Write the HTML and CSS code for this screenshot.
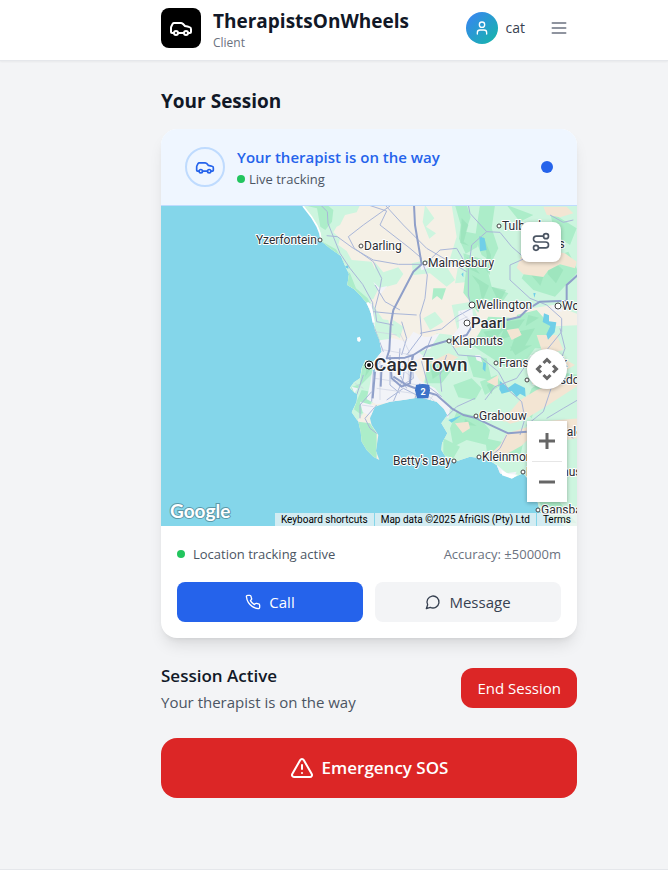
FILE: index.html
```html
<!DOCTYPE html>
<html lang="en">
<head>
<meta charset="utf-8">
<meta name="viewport" content="width=device-width, initial-scale=1">
<title>TherapistsOnWheels</title>
<link rel="stylesheet" href="styles.css">
</head>
<body>
<svg class="sprite" aria-hidden="true">
  <symbol id="car" viewBox="0 0 24 24"><path d="M19 17h2c.6 0 1-.4 1-1v-3c0-.9-.7-1.7-1.5-1.9C18.7 10.6 16 10 16 10s-1.300-1.400-2.200-2.300c-.5-.4-1.100-.7-1.800-.7H5c-.6 0-1.100.4-1.400.9l-1.400 2.900A3.700 3.700 0 0 0 2 12v4c0 .6.4 1 1 1h2"/><circle cx="7" cy="17" r="2"/><path d="M9 17h6"/><circle cx="17" cy="17" r="2"/></symbol>
</svg>
<header class="topbar">
  <div class="container topbar-row">
    <div class="logo"><svg class="icon icon-24"><use href="#car"/></svg></div>
    <div class="brand">
      <span class="brand-name">TherapistsOnWheels</span>
      <span class="brand-role">Client</span>
    </div>
    <div class="account">
      <span class="avatar"><svg class="icon icon-16" viewBox="0 0 24 24"><path d="M19 21v-2a4 4 0 0 0-4-4H9a4 4 0 0 0-4 4v2"/><circle cx="12" cy="7" r="4"/></svg></span>
      <span class="user-name">cat</span>
    </div>
    <button class="menu-button" type="button" aria-label="Menu"><svg class="icon icon-20" viewBox="0 0 24 24"><path d="M4 6h16M4 12h16M4 18h16"/></svg></button>
  </div>
</header>

<main class="main">
 <div class="container content">
  <h1 class="page-title">Your Session</h1>
  <section class="card">
    <div class="card-head">
      <div class="ring"><svg class="icon icon-20"><use href="#car"/></svg></div>
      <div class="head-text">
        <h2 class="head-title">Your therapist is on the way</h2>
        <p class="live"><span class="dot"></span>Live tracking</p>
      </div>
      <span class="pulse"></span>
    </div>

    <div class="map">
      <svg class="map-canvas" viewBox="0 0 416 320" preserveAspectRatio="xMidYMid slice" role="img" aria-label="Map of Cape Town and surroundings">
        <defs>
          <path id="coast" d="M-111 3L-86 35-69 63-60 85-57 108-30 130 3 153 14 180 27 207 22 240 42 252 60 270 80 293 95 330 105 375 118 405 125 440 100 470 76 465 65 490 60 520 42 532 30 548 40 560 52 568 50 590 35 622 55 650 62 680 65 710 80 735 100 755 118 765 108 738 115 690 95 660 90 640 105 605 150 590 195 584 240 577 290 590 312 612 322 630 304 655 322 685 306 715 304 735 320 760 345 770 390 755 440 762 470 780 480 805 515 820 550 805 570 830 590 880 600 920 640 940 680 966 720 966V0H-111Z"/>
          <clipPath id="land"><use href="#coast"/></clipPath>
        </defs>
        <rect width="416" height="320" fill="#84d6ea"/>
        <g transform="translate(179 -1) scale(.333333)">
          <use href="#coast" fill="#f5f0e6"/>
          <g clip-path="url(#land)">
            <g fill="#cdf5df">
              <path d="M-111 0L10 0 60 0 50 22 15 30 0 60-10 65-20 82 0 100-5 120 20 138 35 165 95 170 110 205 70 215 90 230 92 290 130 345 100 360 60 300 0 260-120 120Z"/>
              <path d="M60 195l45 5 0-28 25 30 45-15 15 20-20 30-55 15-15 30-30 5-15-30-25-8z"/>
              <path d="M335 0H720V330L640 300 560 312 470 290 400 300 390 230 345 235 355 180 330 160 350 95Z"/>
              <path d="M255 0l28 40-25 25 30 20-20 16-20-50zM215 175l45-10 60 20 25 40-25 20-50-40-50 5zM100 340l45 5 10 50-20 40-30-25zM250 340l35-20 25 30-40 25zM160 345l30 20-10 35-30-20zM335 300l60-10 20 50-30 5-20 70-40 45-80 5-10-25 70-18 50-35z"/>
              <path d="M290 385L420 400 500 370 720 360V966H560L470 780 300 780V620L245 550 260 505 350 480 320 440 270 430Z"/>
              <path d="M20 490l90-30-10 130-60 70z"/>
            </g>
            <g fill="#acedc9">
              <path d="M-111 0H-38l18 15-4 35-20 25-15-10-10-55zM-57 108l45 25 25 40-28-8zM0 185l30 20 18 45 35 30 10 20-40-20-35-25zM68 480l38-10 2 25-40 40-30 30-4-18 25-10zM65 555l40 8-18 45-25 20-20-15 8-25zM55 650l35 5 20 30 0 80-50-40z"/>
              <path d="M345 0l35 0 12 35-15 45 40 8-5 38-35 20-20-45 5-42zM420 0h45l-10 70 20 60-20 40-30-20-20-50zM370 145l65 20 20 80 50 20-20 28-60-15-10 45-45-60 8-65zM390 180l50-5 0 50-36 28zM445 335l100 5 100 90-60 0-30 40-60 15-100-65 25-40zM530 330l60-15 50 55-30 45-50-8zM500 0l80 30-40 20zM630 20l80 50-20 50-45-30zM565 180l120-40 30 60-70 75-65-20-35-35z"/>
              <path d="M280 250h38l-12 35-15-12-15 12zM260 470l55-10 20 35-30 40-50 0zM340 540l55-20 30 30-20 35-50-8zM420 530l50-20 15 30-50 30zM380 450l60 10 15 65-55-10zM575 550l80-50 60 10-60 25-60 40-20 65-25-25zM350 620l65 15 35 40-10 45-60-15-40 20-10-55zM590 870l60 10 60 75-90-10zM310 700l50 25-20 35-30-10zM435 700l70 15 50-25-15 65-95 15z"/>
            </g>
            <g fill="#96e1b8" opacity=".65">
              <path d="M365 40l20 20-14 50 16 12-26-8zM428 90l25 60-4 60-18-25 10-32zM380 155l40 52-30-14zM454 245l44 10-20 40zM500 350l55-8-34 48-42 16zM430 380l64-10-40 46zM530 380l55-10-33 58-42 10zM565 330l32 8-40 25zM510 425l66-4-50 30zM395 210l52 32-20 48-10-50zM620 150l50 45-22 40-25-28zM565 200l46 12-10 30zM270 480l48 14-40 28zM375 642l35 20-38-2zM80 490l20-10-25 36zM440 540l25-14-10 42z"/>
            </g>
            <g fill="#f3e5d3">
              <path d="M545 150l70-15 60 10 35 25-5 20-45-12-35 18-15 20-60-8-20-20zM610 5l70 0 20 20-40 12-40-8zM500 375l35-5 10 20-30 15zM470 635l35-15 22 20-35 10zM540 585l50-30 110-42 15 28-100 65-65 40-40 10-20-12zM590 650l130-10v58l-65 10-60-15zM345 655l40-5 5 20-22 14zM500 685l60-18 25 15-40 40-50 28-60 12 45-42zM440 530l35-20-2 36zM265 475l60-30 30 12-38 22zM330 410l25-8 20 20-30 8zM590 390l60 0 20 45-60 15zM610 470l60-10 35 20-35 20z"/>
            </g>
            <g fill="#f2f3f8">
              <path d="M82 292l15 5 8 70-15-20zM100 230l18 18 24-5-22 26zM355 318l42-8 4 50-22 45-44-8 22-30zM90 410l70-10 40 10 20-30 40 20-28 38 18 15-40 25 30 50-25 20 10 35-115 15-30-15 10-45 10-60zM225 520l60 30 45 60-5 30-85-62-35-28zM35 545l18 5-10 15zM60 590l45 12-12 30-25-10zM200 400l70-5 30-12-30 48-55 12zM405 450l16 0 5 22-16-6zM570 450l40 5-30 15zM465 775l35 30 30-5-10 20-45-10zM635 300l30 0 0 20-30-5zM240 180l20-8 8 16-24 8z"/>
            </g>
            <g fill="#70cfe8">
              <path d="M418 94l16 6 6 35-20 4zM612 325l15 6 0 18 22 3-5 30-20 22-5-16 12-25-23-12zM480 528l25 20 20-14 30 15 2 26-17-9-10 10-15-18-30 8-7-13zM430 470l8 5-2 25-8-8zM364 208l6-6 0 15zM10 185l15-4 0 10zM580 264l7 0-4 14zM325 645l40-14-30 22zM98 495l7 0-4 18z"/>
            </g>
            <g class="minor">
              <path d="M-58 0L-38 20-36 55 0 145 30 190 68 238 98 293 100 360 130 440M-40 92L-8 95 40 130 100 165 175 178 250 178M150 3L70 60 25 95 43 130 100 170 125 220 118 260 105 310 110 350M85 0L140 18 120 60 210 130 245 160M138 3L190 60 260 130 380 200M250 180L262 210 255 280 240 330 245 390 200 450M255 178L300 135 350 130 385 190 385 270 395 310M385 0L390 25 440 80 395 120 390 160M440 80L480 82 515 125 555 160M555 160L510 180 510 225 570 280 620 300M105 240L135 290 180 315M100 320L150 325 230 330M110 350L160 360M240 385L305 372 350 335 395 310M330 410L355 450 420 455 475 500 505 555 545 590M275 395L245 470 265 545 305 575M140 585L190 550 290 600M320 450L300 510 305 560M320 635L350 605 405 580M435 585L465 545 530 520 565 470M545 590L555 640 540 690M500 690L480 730 445 760M620 300L665 340 665 380 600 460M655 300L690 310M700 45L670 52 630 30M660 370L675 430 640 530 610 620 560 660M713 585L670 610 620 640M700 700L670 680M95 560L60 600 60 640M110 600L75 640 90 670 110 685M160 590L190 520 195 470M125 460L100 500 95 590M150 450L150 540 180 565M180 430L175 500 200 550M215 455L220 520 180 545M185 350L200 400 185 450M70 510L50 570M240 535L225 580"/>
            </g>
            <g class="street">
              <path d="M105 430l110 20M100 485h100M105 520l130 20M110 550l110 15M150 465l70 55M120 455v130M205 445v80M240 550l70 62M265 555l-15 35M45 535l25 15M65 600l35 5M280 570l-20 30M180 385l30 60M105 380l65 10M350 350l32-15M360 320l35 30"/>
            </g>
            <g class="major">
              <path d="M222 0L225 60 245 178 220 200 160 315 152 360 148 435 140 460 195 458 220 450 260 425 330 405 380 390 395 365M500 345L540 335 560 315 600 290 680 287 680 240 713 210M160 515L200 540 240 555 290 570 335 610 370 630 405 638 455 662 505 685 560 680M150 460L155 520 185 545 210 535 215 470 220 450M105 500L98 580M125 480L122 545"/>
            </g>
          </g>
          <path d="M-111 3L-86 35-69 63-60 85-57 108" fill="none" stroke="#fff" stroke-width="5"/>
          <path d="M82 293l12 20 7 40" fill="none" stroke="#fff" stroke-width="7"/>
          <path d="M51 398l8-3 4 9-5 7-6-3zM484 795l22 12 28 2-18 12-30-10z" fill="#fff"/>
          <path d="M228 540q20-6 40 0l2 16-5 24h-34l-6-24z" fill="#3d73c9"/>
        </g>
        <g class="pins">
          <circle cx="159" cy="34" r="2"/><circle cx="200" cy="40" r="2"/><circle cx="264" cy="57" r="2"/><circle cx="338" cy="20" r="2"/><circle cx="311" cy="99" r="3"/><circle cx="306" cy="117" r="3"/><circle cx="288" cy="135" r="2"/><circle cx="335" cy="157" r="2"/><circle cx="397" cy="100" r="3"/><circle cx="366" cy="174" r="2"/><circle cx="315" cy="210" r="2"/><circle cx="318" cy="251" r="2"/><circle cx="293" cy="255" r="2"/><circle cx="362" cy="266" r="2"/><circle cx="377" cy="304" r="2"/>
        </g>
        <circle cx="208" cy="159" r="4" fill="#fff" stroke="#111"/><circle cx="208" cy="159" r="2" fill="#111"/>
        <g class="labels">
          <text x="95" y="38">Yzerfontein</text><text x="203" y="44">Darling</text><text x="267" y="61">Malmesbury</text><text x="341" y="24">Tulbagh</text><text x="373" y="42">Ceres</text><text x="315" y="103">Wellington</text><text x="401" y="104">Wo</text><text x="291" y="139">Klapmuts</text><text x="338" y="161">Franschhoek</text><text x="369" y="178">Villiersdo</text><text x="318" y="214">Grabouw</text><text x="398" y="230">Cale</text><text x="321" y="255">Kleinmond</text><text x="232" y="259">Betty's Bay</text><text x="365" y="270">Hermanus</text><text x="380" y="308">Gansba</text>
          <text class="town" x="310" y="122">Paarl</text>
          <text class="city" x="213" y="165">Cape Town</text>
        </g>
        <text class="shield" x="262" y="189">2</text>
        <text class="map-logo" x="9" y="312">Google</text>
      </svg>
      <button class="map-button route" type="button" aria-label="Show route"><svg class="icon icon-20" viewBox="0 0 24 24"><circle cx="6" cy="19" r="3"/><path d="M9 19h8.500a3.500 3.500 0 0 0 0-7h-11a3.500 3.500 0 0 1 0-7H15"/><circle cx="18" cy="5" r="3"/></svg></button>
      <div class="map-controls">
        <button class="map-button pan" type="button" aria-label="Map camera controls"><svg class="control-icon" viewBox="0 0 24 24"><path d="M8.500 6L12 2.500 15.500 6M8.500 18l3.500 3.500 3.500-3.500M6 8.500L2.500 12 6 15.500M18 8.500l3.500 3.500-3.500 3.500"/></svg></button>
        <div class="zoom">
          <button type="button" aria-label="Zoom in"><svg class="control-icon" viewBox="0 0 24 24"><path d="M4 12h16M12 4v16"/></svg></button>
          <hr>
          <button type="button" aria-label="Zoom out"><svg class="control-icon" viewBox="0 0 24 24"><path d="M4 12h16"/></svg></button>
        </div>
      </div>
      <div class="attribution">
        <button type="button">Keyboard shortcuts</button>
        <span>Map data ©2025 AfriGIS (Pty) Ltd</span>
        <a href="#terms">Terms</a>
      </div>
    </div>

    <div class="card-foot">
      <div class="status">
        <span class="status-live"><span class="dot"></span>Location tracking active</span>
        <span class="accuracy">Accuracy: ±50000m</span>
      </div>
      <div class="actions">
        <button class="action call" type="button"><svg class="icon icon-16" viewBox="0 0 24 24"><path d="M22 16.920v3a2 2 0 0 1-2.180 2 19.790 19.790 0 0 1-8.630-3.070 19.500 19.500 0 0 1-6-6 19.790 19.790 0 0 1-3.070-8.670A2 2 0 0 1 4.110 2h3a2 2 0 0 1 2 1.720 12.840 12.840 0 0 0 .7 2.810 2 2 0 0 1-.45 2.110L8.090 9.910a16 16 0 0 0 6 6l1.270-1.270a2 2 0 0 1 2.110-.45 12.840 12.840 0 0 0 2.810.7A2 2 0 0 1 22 16.920z"/></svg>Call</button>
        <button class="action message" type="button"><svg class="icon icon-16" viewBox="0 0 24 24"><path d="M7.900 20A9 9 0 1 0 4 16.100L2 22Z"/></svg>Message</button>
      </div>
    </div>
  </section>

  <section class="session">
    <div>
      <h2 class="session-title">Session Active</h2>
      <p class="session-note">Your therapist is on the way</p>
    </div>
    <button class="end" type="button">End Session</button>
  </section>
  <button class="sos" type="button"><svg class="icon icon-24" viewBox="0 0 24 24"><path d="m21.730 18-8-14a2 2 0 0 0-3.480 0l-8 14A2 2 0 0 0 4 21h16a2 2 0 0 0 1.730-3Z"/><path d="M12 9v4M12 17h.01"/></svg>Emergency SOS</button>
 </div>
</main>
<footer class="bottom-bar"></footer>
</body>
</html>
```
FILE: styles.css
```css
* { box-sizing: border-box; }

body {
  margin: 0;
  min-height: 100vh;
  display: flex;
  flex-direction: column;
  background: #f3f4f6;
  color: #111827;
  font: 15px/24px "Segoe UI", "Open Sans", sans-serif;
}

h1, h2, p { margin: 0; }
button { font: inherit; border: 0; cursor: pointer; }

.sprite { position: absolute; width: 0; height: 0; }

.icon {
  display: block;
  flex: none;
  fill: none;
  stroke: currentColor;
  stroke-width: 2;
  stroke-linecap: round;
  stroke-linejoin: round;
}
.icon-16 { width: 16px; height: 16px; }
.icon-20 { width: 20px; height: 20px; }
.icon-24 { width: 24px; height: 24px; }

.topbar, .main { padding-left: 70px; }
.main { flex: 1; }

.container { width: 100%; max-width: 448px; margin: 0 auto; }

.topbar {
  background: #fff;
  border-bottom: 1px solid #e5e7eb;
  box-shadow: 0 1px 2px rgba(0, 0, 0, .05);
}

.topbar-row {
  display: flex;
  align-items: center;
  padding: 6px 16px 10px;
}

.logo {
  display: grid;
  place-items: center;
  width: 40px;
  height: 40px;
  border-radius: 8px;
  background: #000;
  color: #fff;
}

.brand { display: flex; flex-direction: column; margin-left: 12px; }
.brand-name { font-size: 19px; line-height: 30px; font-weight: 700; }
.brand-role { font-size: 12px; line-height: 14px; color: #6b7280; }

.account { display: flex; align-items: center; gap: 8px; margin-left: auto; }
.avatar {
  display: grid;
  place-items: center;
  width: 32px;
  height: 32px;
  border-radius: 50%;
  background: linear-gradient(135deg, #3b82f6, #14b8a6);
  color: #fff;
}
.user-name { font-size: 14px; color: #374151; }

.menu-button {
  margin-left: 16px;
  padding: 8px;
  background: none;
  color: #6b7280;
}

.content { padding: 26px 16px 70px; }

.page-title { margin-bottom: 14px; font-size: 19px; line-height: 28px; font-weight: 700; }

.card {
  overflow: hidden;
  border-radius: 16px;
  background: #fff;
  box-shadow: 0 10px 15px -3px rgba(0, 0, 0, .1), 0 4px 6px -4px rgba(0, 0, 0, .1);
}

.card-head {
  display: flex;
  align-items: center;
  gap: 12px;
  padding: 16px 24px;
  border-bottom: 1px solid #bfdbfe;
  background: #eff6ff;
}

.ring {
  display: grid;
  place-items: center;
  width: 40px;
  height: 40px;
  border: 2px solid #bfdbfe;
  border-radius: 50%;
  color: #2563eb;
}

.head-text { flex: 1; }
.head-title { font-size: 15px; line-height: 24px; font-weight: 600; color: #2563eb; }
.live { display: flex; align-items: center; gap: 4px; font-size: 13px; line-height: 20px; color: #4b5563; }
.dot { width: 8px; height: 8px; border-radius: 50%; background: #22c55e; }
.pulse { width: 12px; height: 12px; border-radius: 50%; background: #2563eb; }

.map { position: relative; height: 320px; overflow: hidden; background: #84d6ea; }
.map-canvas { display: block; width: 100%; height: 100%; font-family: Roboto, sans-serif; }
.minor, .street, .major { fill: none; stroke: #a9b6d8; stroke-width: 3; stroke-linejoin: round; }
.street { stroke: #cbd2e3; stroke-width: 2; }
.major { stroke: #8f9fc9; stroke-width: 6; }
.pins { fill: #fff; stroke: #444; }
.labels { font-size: 12px; fill: #2b2d33; stroke: #fff; stroke-width: 2px; stroke-linejoin: round; paint-order: stroke; }
.town { font-size: 15px; font-weight: 500; }
.city { font-size: 19px; font-weight: 500; }
.shield { font-size: 9px; font-weight: 700; text-anchor: middle; fill: #fff; }
.map-logo { font: 700 19px Lato, sans-serif; fill: #fff; stroke: #5b98a8; stroke-width: 2px; paint-order: stroke; }

.map-button, .zoom {
  background: #fff;
  box-shadow: 0 1px 4px rgba(0, 0, 0, .3);
}
.map-button { display: grid; place-items: center; width: 40px; height: 40px; padding: 0; }
.route { position: absolute; top: 16px; right: 16px; border-radius: 8px; color: #4b5563; }
.map-controls {
  position: absolute;
  right: 10px;
  bottom: 24px;
  display: flex;
  flex-direction: column;
  gap: 32px;
}
.pan { border-radius: 50%; }
.zoom button { display: grid; place-items: center; width: 40px; height: 40px; padding: 0; background: none; }
.zoom hr { width: 30px; height: 1px; margin: 0 auto; border: 0; background: #e6e6e6; }
.control-icon { width: 24px; height: 24px; fill: none; stroke: #666; stroke-width: 3; }

.attribution {
  position: absolute;
  right: 0;
  bottom: 0;
  display: flex;
  gap: 1px;
  font: 10px/13px Roboto, sans-serif;
}
.attribution > * { padding: 0 6px; background: rgba(245, 245, 245, .7); color: #000; text-decoration: none; white-space: nowrap; }

.card-foot { padding: 16px; }
.status { display: flex; align-items: center; justify-content: space-between; margin-bottom: 16px; font-size: 13px; line-height: 24px; }
.status-live { display: flex; align-items: center; gap: 8px; color: #4b5563; }
.accuracy { color: #6b7280; }

.actions { display: grid; grid-template-columns: 1fr 1fr; gap: 12px; }
.action { display: flex; align-items: center; justify-content: center; gap: 8px; height: 40px; border-radius: 8px; }
.call { background: #2563eb; color: #fff; }
.message { background: #f3f4f6; color: #374151; }

.session { display: flex; align-items: center; justify-content: space-between; margin: 24px 0; }
.session-title { font-size: 17px; line-height: 28px; font-weight: 600; }
.session-note { line-height: 24px; color: #4b5563; }
.end { height: 40px; padding: 0 16px; border-radius: 12px; background: #dc2626; color: #fff; }

.sos {
  display: flex;
  align-items: center;
  justify-content: center;
  gap: 8px;
  width: 100%;
  height: 60px;
  border-radius: 16px;
  background: #dc2626;
  color: #fff;
  font-size: 17px;
  font-weight: 600;
}

.bottom-bar { height: 10px; border-top: 1px solid #e5e7eb; background: #fff; }
```
